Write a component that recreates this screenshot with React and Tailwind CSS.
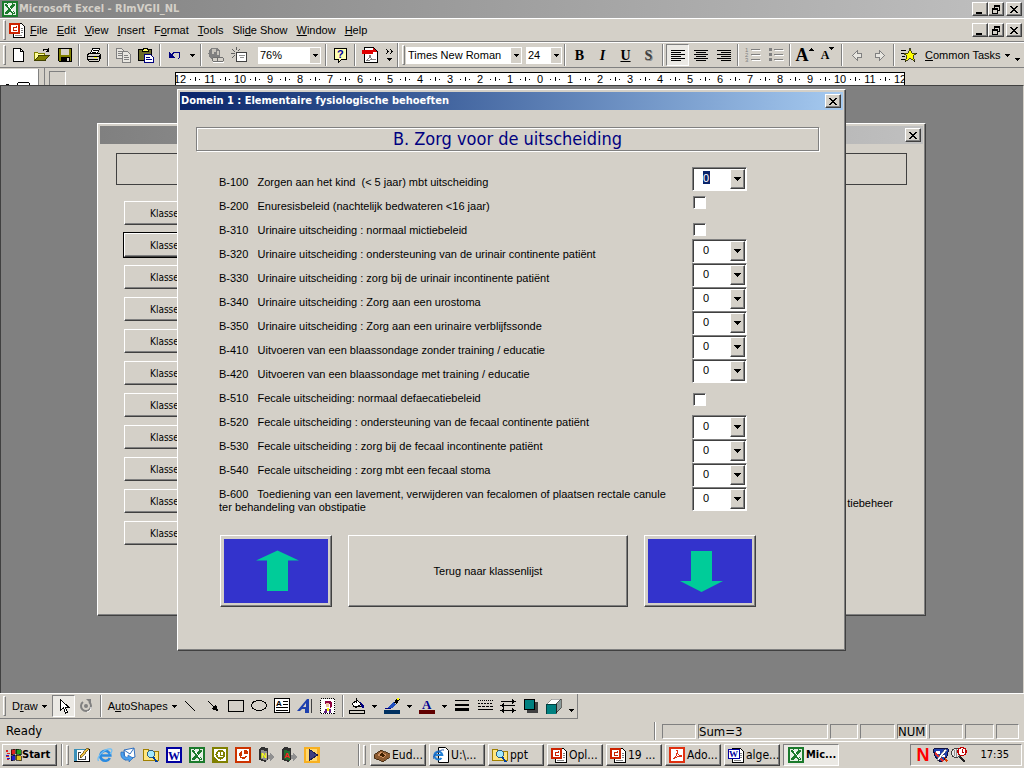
// PowerPoint workspace with the care registration dialog on top
import { useState } from 'react';

const raised =
  'bg-[#d4d0c8] border border-t-white border-l-white border-r-[#404040] border-b-[#404040] shadow-[inset_-1px_-1px_0_#808080]';
const sunken = 'border border-t-[#808080] border-l-[#808080] border-r-white border-b-white';
const pressed = 'bg-[#ebe9e4] border border-t-[#808080] border-l-[#808080] border-r-white border-b-white';

const menus = [
  ['', 'F', 'ile'],
  ['', 'E', 'dit'],
  ['', 'V', 'iew'],
  ['', 'I', 'nsert'],
  ['F', 'o', 'rmat'],
  ['', 'T', 'ools'],
  ['Sli', 'd', 'e Show'],
  ['', 'W', 'indow'],
  ['', 'H', 'elp'],
];

const items = [
  { id: 'B-100', text: 'Zorgen aan het kind  (< 5 jaar) mbt uitscheiding' },
  { id: 'B-200', text: 'Enuresisbeleid (nachtelijk bedwateren <16 jaar)' },
  { id: 'B-310', text: 'Urinaire uitscheiding : normaal mictiebeleid' },
  { id: 'B-320', text: 'Urinaire uitscheiding : ondersteuning van de urinair continente patiënt' },
  { id: 'B-330', text: 'Urinaire uitscheiding : zorg bij de urinair incontinente patiënt' },
  { id: 'B-340', text: 'Urinaire uitscheiding : Zorg aan een urostoma' },
  { id: 'B-350', text: 'Urinaire uitscheiding : Zorg aan een urinaire verblijfssonde' },
  { id: 'B-410', text: 'Uitvoeren van een blaassondage zonder training / educatie' },
  { id: 'B-420', text: 'Uitvoeren van een blaassondage met training / educatie' },
  { id: 'B-510', text: 'Fecale uitscheiding: normaal defaecatiebeleid' },
  { id: 'B-520', text: 'Fecale uitscheiding : ondersteuning van de fecaal continente patiënt' },
  { id: 'B-530', text: 'Fecale uitscheiding : zorg bij de fecaal incontinente patiënt' },
  { id: 'B-540', text: 'Fecale uitscheiding : zorg mbt een fecaal stoma' },
  {
    id: 'B-600',
    text: 'Toediening van een lavement, verwijderen van fecalomen of plaatsen rectale canule ter behandeling van obstipatie',
  },
];

function Svg({ children, w = 16, h = 16, smooth }) {
  return (
    <svg
      width={w}
      height={h}
      viewBox={`0 0 ${w} ${h}`}
      shapeRendering={smooth ? 'auto' : 'crispEdges'}
      fill="none"
      className="shrink-0"
      aria-hidden="true"
    >
      {children}
    </svg>
  );
}

/* ---------- icons ---------- */

const Caret = () => (
  <Svg w={5} h={3}>
    <path d="M0 0h5v1H0zM1 1h3v1H1zM2 2h1v1H2z" fill="#000" />
  </Svg>
);

const ExcelIcon = () => (
  <Svg>
    <rect width="16" height="16" fill="#1b7a2c" />
    <rect x="2" y="2" width="12" height="12" fill="#e6f0e6" />
    <path d="M4 3l8 10M12 3L4 13" stroke="#1b7a2c" strokeWidth="3" />
    <path d="M5 3l7 9" stroke="#fff" strokeWidth="1" />
  </Svg>
);

const SlideDocIcon = () => (
  <Svg>
    <path d="M4.500 1.500h8l3 3v11h-11z" fill="#fff" stroke="#000" />
    <path d="M12 6.500h2M12 8.500h2M12 10.500h2M6 13.500h7" stroke="#808080" />
    <rect x="0" y="1" width="11" height="11" fill="#fff" />
    <rect x="1" y="2" width="9" height="9" stroke="#cc2200" strokeWidth="2" />
    <path d="M4 5h3v1H5v2h3v1H4zM7 4h1v2H7z" fill="#cc2200" />
  </Svg>
);

const WordDocIcon = () => (
  <Svg>
    <path d="M4.500 1.500h8l3 3v11h-11z" fill="#fff" stroke="#000" />
    <path d="M12 6.500h2M12 8.500h2M12 10.500h2M6 13.500h7" stroke="#808080" />
    <rect x="0" y="2" width="12" height="10" fill="#0000a0" />
    <rect x="1" y="3" width="10" height="8" fill="#fff" />
    <text x="1" y="10" fontSize="9" fontWeight="bold" fontFamily="Liberation Serif, serif" fill="#0000a0">W</text>
  </Svg>
);

const NewIcon = () => (
  <Svg>
    <path d="M2.500 1.500h7l3 3v10h-10z" fill="#fff" stroke="#000" />
    <path d="M9.500 1.500v3h3" stroke="#000" />
  </Svg>
);

const OpenIcon = () => (
  <Svg>
    <path d="M0.500 13.500v-8h3l1 1h6v2" fill="#ffff99" stroke="#808000" />
    <path d="M1 13.500l4-5h10l-4 5z" fill="#808000" stroke="#404000" />
    <path d="M9 3.500c1-2 4-2 5 0M14.500 1v3h-3" stroke="#000" />
  </Svg>
);

const SaveIcon = () => (
  <Svg>
    <path d="M1.500 1.500h13v13h-12l-1-1z" fill="#808000" stroke="#000" />
    <rect x="4" y="2" width="8" height="6" fill="#d4d0c8" />
    <rect x="4" y="10" width="9" height="4" fill="#000" />
    <rect x="10" y="11" width="2" height="3" fill="#d4d0c8" />
  </Svg>
);

const PrintIcon = () => (
  <Svg>
    <path d="M4.500 6.500l2-5h7l-2 5z" fill="#fff" stroke="#000" />
    <path d="M7 3.500h5M6 5.500h4" stroke="#000" />
    <path d="M1.500 7.500l2-1h10l1 1v4l-2 3h-9l-2-2z" fill="#d4d0c8" stroke="#000" />
    <path d="M2 9.500h11M2 12.500h10M13.500 8v5" stroke="#000" />
    <rect x="8" y="10" width="3" height="1" fill="#ffff00" />
  </Svg>
);

const CopyIcon = () => (
  <Svg>
    <path d="M1.500 1.500h5l2 2v8h-7z" fill="#e8e6e0" stroke="#808080" />
    <path d="M3 4.500h4M3 6.500h5M3 8.500h5" stroke="#808080" />
    <path d="M7.500 4.500h5l3 3v8h-8z" fill="#e8e6e0" stroke="#808080" />
    <path d="M9 8.500h4M9 10.500h5M9 12.500h5" stroke="#808080" />
  </Svg>
);

const PasteIcon = () => (
  <Svg>
    <rect x="0.500" y="2.500" width="13" height="11" fill="#6b6b2a" stroke="#000" />
    <path d="M4.500 4.500v-2l2-1h2l2 1v2z" fill="#ffff66" stroke="#000" />
    <path d="M6.500 7.500h6l3 3v5h-9z" fill="#fff" stroke="#000080" />
    <path d="M8 10.500h4M8 12.500h6" stroke="#000080" />
  </Svg>
);

const UndoIcon = () => (
  <Svg>
    <path d="M2 5v6h6z" fill="#000080" />
    <path d="M5 8c2-4 8-4 8 0 0 2-1 3-2 4" stroke="#000080" strokeWidth="1" />
  </Svg>
);

const GlobeIcon = () => (
  <Svg>
    <circle cx="6.500" cy="6.500" r="6" fill="#808080" />
    <path d="M4 2h4v3H6v2H4zM9 4h2v4H9z" fill="#c8c4bc" />
    <rect x="4.500" y="10.500" width="6" height="4" rx="2" fill="#d4d0c8" stroke="#707070" />
    <rect x="9.500" y="10.500" width="6" height="4" rx="2" fill="#d4d0c8" stroke="#707070" />
    <path d="M5 15.500h11" stroke="#fff" />
  </Svg>
);

const NewSlideIcon = () => (
  <Svg>
    <rect x="5.500" y="5.500" width="10" height="9" fill="#fff" stroke="#404040" />
    <path d="M8 8.500h6M9 10.500h4" stroke="#909090" />
    <path d="M5.500 0v3M1 2l3 3M0 6.500h4M1 11l3-3M9 2L7 4" stroke="#606060" />
  </Svg>
);

const HelpIcon = () => (
  <Svg>
    <path d="M1.500 1.500h12v11h-5l-3 3v-3h-4z" fill="#ffffb0" stroke="#000" />
    <text x="4" y="11" fontSize="11" fontWeight="bold" fontFamily="Liberation Sans, sans-serif" fill="#0000a0">?</text>
  </Svg>
);

const PdfIcon = () => (
  <Svg>
    <path d="M2.500 0.500h9l4 4v11h-13z" fill="#fff" stroke="#000" />
    <rect x="0" y="3" width="11" height="4" fill="#e00000" />
    <path d="M11 1l4 4h-4z" fill="#e00000" />
    <path d="M4 14c2-1 4-4 4-6 0 3 2 5 6 5-4-1-7 0-10 1" stroke="#808080" />
  </Svg>
);

const alignRows = {
  left: [0, 0, 0, 0, 0, 0],
  center: [0, 2, 0, 2, 0, 2],
  right: [0, 4, 0, 4, 0, 4],
};

const AlignIcon = ({ kind }) => (
  <Svg>
    {alignRows[kind].map((x, i) => (
      <rect key={i} x={1 + x} y={3 + i * 2} width={i % 2 ? 10 : 14} height="1" fill="#000" />
    ))}
  </Svg>
);

const ListIcon = ({ numbered }) => (
  <Svg>
    {[1, 6, 11].map((y, i) => (
      <g key={y}>
        {numbered ? (
          <text x="0" y={y + 4} fontSize="6" fontFamily="Liberation Sans, sans-serif" fill="#808080">{i + 1}</text>
        ) : (
          <rect x="1" y={y} width="3" height="3" fill="#808080" />
        )}
        <rect x="6" y={y + 1} width="9" height="1" fill="#808080" />
        <rect x="7" y={y + 2} width="9" height="1" fill="#fff" />
      </g>
    ))}
  </Svg>
);

const ArrowOutline = ({ right }) => (
  <Svg>
    <path
      d={right ? 'M3.500 6.500h4v-3l5 5-5 5v-3h-4z' : 'M12.500 6.500h-4v-3l-5 5 5 5v-3h4z'}
      fill="#e8e6e0"
      stroke="#808080"
    />
  </Svg>
);

const StarIcon = () => (
  <Svg>
    <path d="M0 3.500h5M0 6.500h3M1 9.500h3M0 12.500h4" stroke="#000" />
    <path d="M9 1l2 5h5l-4 3 2 6-5-4-5 4 2-6-4-3h5z" fill="#ffff00" stroke="#000" strokeWidth="0.700" />
  </Svg>
);

const PointerIcon = () => (
  <Svg>
    <path d="M5.500 1.500v11l3-2.500 2 5 2-1-2-4.500h3.500z" fill="#fff" stroke="#000" />
  </Svg>
);

const RotateIcon = () => (
  <Svg smooth>
    <path d="M11 4a5 5 0 1 1-6 0" stroke="#808080" strokeWidth="2" />
    <path d="M8 1h5v5z" fill="#808080" />
    <circle cx="8" cy="8" r="2" fill="#808080" />
    <path d="M13 9a5 5 0 0 1-4 5" stroke="#fff" />
  </Svg>
);

const LineIcon = () => (
  <Svg><path d="M3 3l10 10" stroke="#000" /></Svg>
);

const LineArrowIcon = () => (
  <Svg>
    <path d="M3 3l7 7" stroke="#000" />
    <path d="M13 13l-7-2 5-5z" fill="#000" />
  </Svg>
);

const RectIcon = () => (
  <Svg><rect x="0.500" y="2.500" width="15" height="11" stroke="#000" /></Svg>
);

const OvalIcon = () => (
  <Svg><ellipse cx="8" cy="7.500" rx="7.500" ry="5" stroke="#000" /></Svg>
);

const TextBoxIcon = () => (
  <Svg>
    <rect x="0.500" y="0.500" width="15" height="14" fill="#fff" stroke="#000" />
    <text x="2" y="8" fontSize="8" fontWeight="bold" fontFamily="Liberation Sans, sans-serif" fill="#000">A</text>
    <path d="M9 3.500h5M9 6.500h5M2 9.500h12M2 12.500h12" stroke="#000" />
  </Svg>
);

const WordArtIcon = () => (
  <Svg smooth>
    <path d="M14.500 1v14" stroke="#404040" />
    <path d="M0 13L10 1h2v14H8v-4H5l-2 2z" fill="#1c3fae" />
    <path d="M6 9l3-4v4z" fill="#d4d0c8" />
  </Svg>
);

const ClipArtIcon = () => (
  <Svg>
    <rect x="0.500" y="0.500" width="14" height="15" fill="#fff" stroke="#000" strokeDasharray="1 1" />
    <path d="M5 3h5l2 2v4l-2 1V6L6 5l-1 3z" fill="#900040" />
    <path d="M6 5h3v4H6z" fill="#f0c0a0" />
    <path d="M5 11h2v4H4zM9 11h2v4H9z" fill="#602080" />
    <path d="M7 10h2v3H7z" fill="#ffff00" />
  </Svg>
);

const FillIcon = () => (
  <Svg>
    <path d="M3 6l5-4 4 4-5 4z" fill="#fff" stroke="#000" />
    <path d="M7 5V0M4 8h8" stroke="#000" />
    <path d="M11 4l4 3v3h-2z" fill="#000080" />
    <rect x="0.500" y="12.500" width="15" height="3" fill="#d4d0c8" stroke="#000" />
  </Svg>
);

const BrushIcon = () => (
  <Svg>
    <path d="M3 10l6-6 3 2-4 4z" fill="#2050c0" />
    <path d="M10 5l3-5 3 1-3 5z" fill="#000" />
    <rect x="13" y="0" width="2" height="2" fill="#ffff00" />
    <path d="M1 10.500h6" stroke="#000080" />
    <rect y="12" width="16" height="4" fill="#003060" />
  </Svg>
);

const FontColorIcon = () => (
  <Svg>
    <text x="3" y="11" fontSize="13" fontWeight="bold" fontFamily="Liberation Serif, serif" fill="#000090">A</text>
    <rect y="12" width="16" height="4" fill="#600000" />
  </Svg>
);

const WeightIcon = () => (
  <Svg><path d="M1 2h14v1H1zM1 6h14v2H1zM1 10h14v3H1z" fill="#000" /></Svg>
);

const DashIcon = () => (
  <Svg>
    <path d="M1 2.500h15" stroke="#000" strokeDasharray="1 1" />
    <path d="M1 5.500h15" stroke="#000" strokeDasharray="2 1" />
    <path d="M1 8.500h15" stroke="#000" strokeDasharray="3 1" />
    <path d="M1 11.500h15" stroke="#000" />
  </Svg>
);

const ArrowStyleIcon = () => (
  <Svg>
    <path d="M1 3.500h13M2 7.500h13M2 12.500h12" stroke="#000" />
    <path d="M12 1l4 2.500-4 2.500zM4 5L0 7.500 4 10zM12 10l4 2.500-4 2.500zM4 10l-4 2.500L4 15z" fill="#000" />
  </Svg>
);

const ShadowIcon = () => (
  <Svg>
    <rect x="4" y="4" width="11" height="11" fill="#404040" />
    <rect x="1.500" y="1.500" width="10" height="10" fill="#008080" stroke="#000" />
  </Svg>
);

const CubeIcon = () => (
  <Svg>
    <path d="M1 6l5-5h9l-5 5z" fill="#fff" stroke="#606060" strokeWidth="0.500" />
    <path d="M10 6l5-5v9l-5 5z" fill="#8a9a9a" stroke="#000" strokeWidth="0.500" />
    <rect x="0" y="6" width="10" height="10" fill="#008080" stroke="#000" strokeWidth="0.500" />
  </Svg>
);

const WindowsFlag = () => (
  <Svg>
    <path d="M0 4h2M1 6.500h3M0 9.500h3M1 12.500h2" stroke="#e02020" strokeWidth="1.500" />
    <path d="M0 8h3M1 11h3" stroke="#2020d0" />
    <path d="M5 3l4-1v5l-4 1z" fill="#e02020" stroke="#000" strokeWidth="0.600" />
    <path d="M10 2l5 1v5l-5-1z" fill="#20a020" stroke="#000" strokeWidth="0.600" />
    <path d="M5 9l4-1v5l-4 1z" fill="#2020d0" stroke="#000" strokeWidth="0.600" />
    <path d="M10 8l5 1v5l-5-1z" fill="#e0c020" stroke="#000" strokeWidth="0.600" />
  </Svg>
);

const DesktopIcon = () => (
  <Svg>
    <path d="M0 2h12v13H0z" fill="#3a90b8" />
    <path d="M3 3h12v11H3z" fill="#fff" />
    <path d="M0 14h15v1H0zM15 2h1v13h-1z" fill="#000" />
    <path d="M6.500 5.500h-2v7h7v-4" stroke="#404040" />
    <path d="M6 9l7-8 2 1-7 8-2 1z" fill="#f0c040" stroke="#403000" strokeWidth="0.600" />
  </Svg>
);

const IeIcon = () => (
  <Svg smooth>
    <path d="M12.800 11a5 5 0 1 1 .5-2.500H4" stroke="#2a8ae0" strokeWidth="2.600" />
    <path d="M1.500 14C-1 10 8 1 14 2c2 1 0 4-1 5" stroke="#70bff5" strokeWidth="1.300" />
  </Svg>
);

const MailIcon = () => (
  <Svg smooth>
    <path d="M4 3l10-2 1 9-10 3z" fill="#fff" stroke="#3070c0" />
    <path d="M4 3l6 4 4-6" stroke="#3070c0" />
    <path d="M1 5c-1 5 2 9 8 8v2l4-4-5-3v2C5 11 3 8 4 5z" fill="#4aa0ee" stroke="#2060b0" strokeWidth="0.600" />
  </Svg>
);

const SearchFolderIcon = () => (
  <Svg>
    <path d="M0.500 2.500h5l1 2h9v9h-15z" fill="#ffe680" stroke="#a08000" />
    <circle cx="8" cy="7" r="3.500" fill="#a0e8ff" stroke="#306080" />
    <path d="M10 10l4 5" stroke="#0040a0" strokeWidth="2" />
  </Svg>
);

const WordIcon = () => (
  <Svg>
    <rect width="16" height="16" fill="#0000a0" />
    <rect x="2" y="2" width="12" height="12" fill="#fff" />
    <text x="2" y="13" fontSize="12" fontWeight="bold" fontFamily="Liberation Serif, serif" fill="#0000a0">W</text>
  </Svg>
);

const OutlookIcon = () => (
  <Svg>
    <rect width="16" height="16" fill="#808000" />
    <rect x="2" y="2" width="12" height="12" fill="#fff" />
    <circle cx="8.500" cy="7.500" r="4" stroke="#808000" strokeWidth="2" />
    <path d="M8.500 5v3h2" stroke="#808000" />
    <path d="M2 10l4 4H2z" fill="#808000" />
  </Svg>
);

const PowerPointIcon = () => (
  <Svg>
    <rect width="16" height="16" fill="#cc3300" />
    <rect x="2" y="2" width="12" height="12" fill="#fff" />
    <path d="M7 4a4 4 0 1 0 5 5H7z" fill="#cc3300" />
    <path d="M9 3v4h4V5l-2-2z" fill="#cc3300" />
    <path d="M6 9.500h4" stroke="#fff" />
  </Svg>
);

const DoorIcon = ({ letter, color, fill }) => (
  <Svg>
    <path d="M1 2l3-2 6 1v12l-3 2-6-2z" fill="#303030" />
    <path d="M3 3l6 1v10l-6-2z" fill={fill} />
    <text x="3" y="11" fontSize="8" fontWeight="bold" fontFamily="Liberation Sans, sans-serif" fill={color}>{letter}</text>
    <path d="M10 8h2V6l4 4-4 4v-2h-2z" fill="#909090" />
  </Svg>
);

const PlayIcon = () => (
  <Svg>
    <rect width="16" height="16" fill="#f8b020" />
    <rect x="2" y="2" width="11" height="12" fill="#ffd870" />
    <path d="M5.500 2.500l8 5.500-8 5.500z" fill="#404080" stroke="#202050" />
  </Svg>
);

const EudoraIcon = () => (
  <Svg>
    <path d="M0 8l7-5 9 4v3l-7 5-9-4z" fill="#8a5a30" stroke="#301800" strokeWidth="0.700" />
    <path d="M3 8l4-3 6 3-4 3z" fill="#d09060" />
    <path d="M5 8l3-2 3 2-2 2z" fill="#402000" />
  </Svg>
);

const IeDocIcon = () => (
  <Svg smooth>
    <path d="M5.500 0.500h7l3 3v12h-10z" fill="#fff" stroke="#000" />
    <path d="M8.500 11a4 4 0 1 1 .8-3H2" stroke="#1f7fd6" strokeWidth="2" />
    <path d="M0 12C0 8 7 2 11 3" stroke="#1f50a0" />
  </Svg>
);

const AcrobatIcon = () => (
  <Svg>
    <rect x="1" y="1" width="14" height="14" fill="#fff" stroke="#e03010" strokeWidth="2" />
    <path d="M4 12c3-2 5-5 4-9 0 4 2 6 5 6-4 0-6 1-9 3" stroke="#e03010" strokeWidth="1.200" />
  </Svg>
);

const ShieldIcon = () => (
  <Svg>
    <path d="M1 2l4-1 3 1 3-1 4 1c1 6-2 10-7 13C3 12 0 8 1 2z" fill="#2040b0" stroke="#101040" />
    <path d="M3 4h4v3H3zM9 8h3v2H9z" fill="#fff" />
    <path d="M2 5l9 9-2 1-7-7z" fill="#e03030" />
    <path d="M12 2L5 11l-1 3 3-2 7-9z" fill="#fff" stroke="#404040" strokeWidth="0.500" />
    <path d="M11 10l4 4-2 1z" fill="#e04000" />
  </Svg>
);

const ScanIcon = () => (
  <Svg>
    <circle cx="5" cy="6" r="4.500" fill="#e8e8e8" stroke="#404040" />
    <path d="M5 2v8M3 3v6" stroke="#909090" />
    <circle cx="11" cy="4.500" r="4" fill="#fff" stroke="#c00000" strokeWidth="1.500" />
    <path d="M11 2v3h2" stroke="#c00000" />
    <path d="M9 10l5 5" stroke="#202020" strokeWidth="2" />
  </Svg>
);

/* ---------- shared controls ---------- */

function IconButton({ label, active, children }) {
  return (
    <button
      aria-label={label}
      className={`flex h-[22px] w-[23px] shrink-0 items-center justify-center ${active ? pressed : ''}`}
    >
      {children}
    </button>
  );
}

function DropButton({ label }) {
  return (
    <button aria-label={label} className="flex h-[22px] w-3 shrink-0 items-center justify-center">
      <Caret />
    </button>
  );
}

const Sep = () => <div className="mx-0.5 h-[22px] w-0.5 shrink-0 border-l border-r border-l-[#808080] border-r-white" />;

const Grip = () => (
  <div className="ml-[3px] mr-px h-5 w-[3px] shrink-0 border border-t-white border-l-white border-r-[#808080] border-b-[#808080]" />
);

function ToolbarSelect({ label, value, width }) {
  return (
    <div className={`relative shrink-0 ${width}`}>
      <select
        aria-label={label}
        defaultValue={value}
        className="block h-[17px] w-full appearance-none bg-white pl-0.5 text-[11px] leading-[17px] outline-none"
      >
        <option>{value}</option>
      </select>
      <span className="pointer-events-none absolute top-px right-px bottom-px flex w-2.5 items-center justify-center bg-[#d4d0c8]">
        <Caret />
      </span>
    </div>
  );
}

function WindowButton({ kind, label }) {
  return (
    <button aria-label={label} className={`flex h-[14px] w-4 shrink-0 items-center justify-center ${raised}`}>
      <Svg w={10} h={9}>
        {kind === 'min' && <rect x="1" y="7" width="6" height="2" fill="#000" />}
        {kind === 'restore' && (
          <>
            <path d="M3 0h6v2H3zM3 2h1v1H3zM8 2h1v4H8zM7 5h1v1H7z" fill="#000" />
            <path d="M1 3h6v2H1zM1 5h1v4H1zM6 5h1v4H6zM2 8h4v1H2z" fill="#000" />
          </>
        )}
        {kind === 'close' && (
          <path
            d="M1 1h2v1H1zM7 1h2v1H7zM2 2h2v1H2zM6 2h2v1H6zM3 3h4v1H3zM4 4h2v1H4zM3 5h4v1H3zM2 6h2v1H2zM6 6h2v1H6zM1 7h2v1H1zM7 7h2v1H7z"
            fill="#000"
          />
        )}
      </Svg>
    </button>
  );
}

function WindowButtons() {
  return (
    <div className="ml-auto flex pr-0.5">
      <WindowButton kind="min" label="Minimize" />
      <WindowButton kind="restore" label="Restore" />
      <div className="w-0.5" />
      <WindowButton kind="close" label="Close" />
    </div>
  );
}

/* ---------- top bars ---------- */

function TitleBar() {
  return (
    <header className="flex h-[18px] items-center bg-linear-to-r from-[#808080] to-[#c0c0c0] pl-0.5">
      <ExcelIcon />
      <h1 className="pl-px font-['DejaVu_Sans_Condensed',sans-serif] text-[11px] font-bold text-[#d4d0c8]">
        Microsoft Excel - RImVGII_NL
      </h1>
      <WindowButtons />
    </header>
  );
}

function MenuBar() {
  return (
    <nav className="flex h-6 items-center border-t border-b border-t-white border-b-[#808080]">
      <Grip />
      <div className="w-0.5" />
      <SlideDocIcon />
      <div className="flex gap-[9px] pl-[5px]">
        {menus.map(([a, key, b]) => (
          <button key={a + key + b} className="whitespace-pre">
            {a}
            <span className="underline">{key}</span>
            {b}
          </button>
        ))}
      </div>
      <WindowButtons />
    </nav>
  );
}

function Toolbar() {
  return (
    <div className="flex h-[26px] items-center overflow-hidden border-t border-b border-t-white border-b-[#808080]">
      <Grip />
      <IconButton label="New"><NewIcon /></IconButton>
      <IconButton label="Open"><OpenIcon /></IconButton>
      <IconButton label="Save"><SaveIcon /></IconButton>
      <Sep />
      <IconButton label="Print"><PrintIcon /></IconButton>
      <Sep />
      <IconButton label="Copy"><CopyIcon /></IconButton>
      <IconButton label="Paste"><PasteIcon /></IconButton>
      <Sep />
      <IconButton label="Undo"><UndoIcon /></IconButton>
      <DropButton label="Undo list" />
      <Sep />
      <IconButton label="Insert hyperlink"><GlobeIcon /></IconButton>
      <IconButton label="New slide"><NewSlideIcon /></IconButton>
      <div className="w-2" />
      <ToolbarSelect label="Zoom" value="76%" width="w-[63px]" />
      <div className="w-0.5" />
      <Sep />
      <IconButton label="Help"><HelpIcon /></IconButton>
      <Sep />
      <IconButton label="Create PDF"><PdfIcon /></IconButton>
      <button aria-label="More buttons" className="flex h-[22px] w-4 flex-col items-center justify-center gap-1">
        <Svg w={8} h={5}>
          <path d="M1 0l2 2.500L1 5M5 0l2 2.500L5 5" stroke="#000" />
        </Svg>
        <Caret />
      </button>
      <div className="h-full w-0.5 border-l border-r border-l-[#808080] border-r-white" />
      <Grip />
      <ToolbarSelect label="Font" value="Times New Roman" width="w-[116px]" />
      <div className="w-1" />
      <ToolbarSelect label="Font size" value="24" width="w-9" />
      <Sep />
      <div className="flex font-['Liberation_Serif',serif] text-[14px] font-bold">
        <IconButton label="Bold">B</IconButton>
        <IconButton label="Italic"><span className="italic">I</span></IconButton>
        <IconButton label="Underline"><span className="underline">U</span></IconButton>
        <IconButton label="Shadow">
          <span className="text-[#404040] [text-shadow:1px_1px_0_#909090]">S</span>
        </IconButton>
      </div>
      <Sep />
      <IconButton label="Align left" active><AlignIcon kind="left" /></IconButton>
      <IconButton label="Center"><AlignIcon kind="center" /></IconButton>
      <IconButton label="Align right"><AlignIcon kind="right" /></IconButton>
      <Sep />
      <IconButton label="Numbering"><ListIcon numbered /></IconButton>
      <IconButton label="Bullets"><ListIcon /></IconButton>
      <Sep />
      <div className="flex font-['Liberation_Serif',serif] font-bold">
        <IconButton label="Increase font size">
          <span className="text-[18px] leading-5">A</span>
          <span className="self-start"><Svg w={5} h={8}><path d="M2 4h1v1H2zM1 5h3v1H1zM0 6h5v1H0z" fill="#000" /></Svg></span>
        </IconButton>
        <IconButton label="Decrease font size">
          <span className="text-[12px] leading-5">A</span>
          <span className="self-start"><Svg w={5} h={8}><path d="M0 3h5v1H0zM1 4h3v1H1zM2 5h1v1H2z" fill="#000" /></Svg></span>
        </IconButton>
      </div>
      <Sep />
      <IconButton label="Promote"><ArrowOutline /></IconButton>
      <IconButton label="Demote"><ArrowOutline right /></IconButton>
      <Sep />
      <button className="flex items-center gap-2 pl-1 whitespace-nowrap">
        <StarIcon />
        <span className="flex items-center gap-1">
          <span><span className="underline">C</span>ommon Tasks</span>
          <Caret />
        </span>
      </button>
      <button aria-label="Toolbar options" className="ml-auto self-end pr-1 pb-1.5"><Caret /></button>
    </div>
  );
}

function Ruler() {
  const marks = Array.from({ length: 25 }, (_, i) => Math.abs(i - 12));
  return (
    <div className="flex h-[17px] items-end overflow-hidden">
      <div className="flex h-4 w-[39px] shrink-0 items-end justify-end border-r border-r-[#808080] bg-white pr-1">
        <Svg w={28} h={4}>
          <path d="M0 3h3v1H0zM12 1h11v1H12zM11 2h1v2h-1zM23 2h1v2h-1z" fill="#000" />
        </Svg>
      </div>
      <div className="h-full w-1.5 shrink-0 border-r border-r-[#808080]" />
      <div className="ml-1 h-3.5 w-[17px] shrink-0 border border-b-0 border-t-[#808080] border-l-[#808080] border-r-white" />
      <div className="ml-[109px] flex h-[13px] w-[730px] shrink-0 justify-center overflow-hidden border-t border-r border-l border-black bg-white">
        {marks.map((n, i) => (
          <div key={i} className="flex w-[30px] shrink-0 items-center justify-between leading-3">
            <span className="h-1 w-px bg-black" />
            <span className="size-px bg-black" />
            <span className="w-3.5 text-center">{n}</span>
            <span className="size-px bg-black" />
            <span className="w-px" />
          </div>
        ))}
      </div>
    </div>
  );
}

/* ---------- windows ---------- */

function ComboBox({ id, highlighted }) {
  const [value, setValue] = useState('0');
  return (
    <div className="relative h-6 w-[55px]">
      <select
        id={id}
        value={value}
        onChange={e => setValue(e.target.value)}
        className={`block h-6 w-full appearance-none border border-t-[#808080] border-l-[#808080] border-r-white border-b-white bg-white pb-0.5 pl-2.5 text-[11px] leading-5 shadow-[inset_1px_1px_0_#404040] outline-none ${
          highlighted
            ? 'bg-[linear-gradient(#0a246a,#0a246a)] bg-[size:7px_13px] bg-[position:10px_3px] bg-no-repeat text-white'
            : 'text-black'
        }`}
      >
        {['0', '1', '2', '3', '4'].map(n => (
          <option key={n} className="text-black">{n}</option>
        ))}
      </select>
      <span
        className={`pointer-events-none absolute top-0.5 right-0.5 bottom-0.5 flex w-[15px] items-center justify-center ${raised}`}
      >
        <Svg w={7} h={4}>
          <path d="M0 0h7v1H0zM1 1h5v1H1zM2 2h3v1H2zM3 3h1v1H3z" fill="#000" />
        </Svg>
      </span>
    </div>
  );
}

function CheckBox({ id }) {
  return (
    <input
      id={id}
      type="checkbox"
      className="ml-px block size-[13px] appearance-none border border-t-[#808080] border-l-[#808080] border-r-white border-b-white bg-white shadow-[inset_1px_1px_0_#404040] checked:bg-[#0a246a]"
    />
  );
}

function BackgroundWindow() {
  return (
    <section className={`absolute top-[37px] left-[96px] w-[829px] p-0.5 pb-[70px] ${raised}`}>
      <div className="flex h-[18px] items-center justify-end bg-linear-to-r from-[#808080] to-[#c0c0c0] pr-0.5">
        <WindowButton kind="close" label="Close" />
      </div>
      <div className="mx-4 mt-[9px] h-8 border border-[#404040]" />
      <div className="mt-4 flex flex-col gap-2 pl-6">
        {Array.from({ length: 11 }, (_, i) => (
          <div key={i} className="flex h-6 items-center justify-between pr-[30px]">
            <button
              className={`h-6 w-40 pl-[25px] text-left font-['DejaVu_Sans_Condensed',sans-serif] text-[10px] ${raised} ${i === 1 ? 'outline outline-black' : ''}`}
            >
              Klasse
            </button>
            {i === 9 && <span className="pt-1">tiebeheer</span>}
          </div>
        ))}
      </div>
    </section>
  );
}

function NavButton({ label, children }) {
  return (
    <button aria-label={label} className={`flex h-[72px] w-28 items-center justify-center ${raised}`}>
      <svg width="104" height="64" viewBox="0 0 104 64" className="bg-[#3333cc]" aria-hidden="true">
        {children}
      </svg>
    </button>
  );
}

function FormDialog() {
  return (
    <section className={`absolute top-[3px] left-[176px] w-[669px] p-0.5 pb-[43px] ${raised}`}>
      <div className="flex h-[18px] items-center justify-between bg-linear-to-r from-[#0a246a] to-[#a6caf0] pr-0.5 pl-px">
        <h2 className="font-['DejaVu_Sans_Condensed',sans-serif] text-[11px] font-bold text-white">
          Domein 1 : Elementaire fysiologische behoeften
        </h2>
        <WindowButton kind="close" label="Close" />
      </div>

      <div className="mr-6 ml-4 pt-[17px]">
        <div className="border border-[#808080] text-center shadow-[inset_1px_1px_0_#fff,1px_1px_0_#fff]">
          <h3 className="font-['DejaVu_Sans_Condensed',sans-serif] text-[18px] leading-[22px] text-[#000080]">
            B. Zorg voor de uitscheiding
          </h3>
        </div>
      </div>

      <div className="mt-4 flex pl-[39px]">
        <div className="w-[473px] pt-[3px]">
          {items.map(({ id, text }) => (
            <label
              key={id}
              htmlFor={id}
              className="block h-6 w-[452px] pt-1.5 leading-[13px] whitespace-pre-wrap"
            >
              {`${id}   ${text}`}
            </label>
          ))}
        </div>
        <div>
          <ComboBox id="B-100" highlighted />
          <div className="flex h-12 flex-col gap-3.5 pt-[5px]">
            <CheckBox id="B-200" />
            <CheckBox id="B-310" />
          </div>
          {['B-320', 'B-330', 'B-340', 'B-350', 'B-410', 'B-420'].map(id => (
            <ComboBox key={id} id={id} />
          ))}
          <div className="flex h-8 items-center">
            <CheckBox id="B-510" />
          </div>
          {['B-520', 'B-530', 'B-540', 'B-600'].map(id => (
            <ComboBox key={id} id={id} />
          ))}
        </div>
      </div>

      <div className="mt-6 flex gap-4 pl-10">
        <NavButton label="Vorige">
          <path d="M53.500 11.500L75 21.500H64V52H43V21.500H32z" fill="#00cc99" />
        </NavButton>
        <button className={`h-[72px] w-[280px] ${raised}`}>Terug naar klassenlijst</button>
        <NavButton label="Volgende">
          <path d="M53.500 53L75 42H64V12H43V42H32z" fill="#00cc99" />
        </NavButton>
      </div>
    </section>
  );
}

/* ---------- bottom bars ---------- */

function DrawingBar() {
  return (
    <div className="flex border-t border-t-white">
      <div className="flex h-[25px] items-center border-r border-b border-[#808080]">
        <Grip />
        <button className="flex items-center gap-1 px-[5px]">
          <span>D<span className="underline">r</span>aw</span>
          <Caret />
        </button>
        <IconButton label="Select objects" active><PointerIcon /></IconButton>
        <IconButton label="Free rotate"><RotateIcon /></IconButton>
        <Sep />
        <button className="flex items-center gap-1 pr-0.5 pl-1">
          <span>A<span className="underline">u</span>toShapes</span>
          <Caret />
        </button>
        <IconButton label="Line"><LineIcon /></IconButton>
        <IconButton label="Arrow"><LineArrowIcon /></IconButton>
        <IconButton label="Rectangle"><RectIcon /></IconButton>
        <IconButton label="Oval"><OvalIcon /></IconButton>
        <IconButton label="Text box"><TextBoxIcon /></IconButton>
        <IconButton label="WordArt"><WordArtIcon /></IconButton>
        <IconButton label="Clip art"><ClipArtIcon /></IconButton>
        <Sep />
        <IconButton label="Fill color"><FillIcon /></IconButton>
        <DropButton label="Fill colors" />
        <IconButton label="Line color"><BrushIcon /></IconButton>
        <DropButton label="Line colors" />
        <IconButton label="Font color"><FontColorIcon /></IconButton>
        <DropButton label="Font colors" />
        <IconButton label="Line style"><WeightIcon /></IconButton>
        <IconButton label="Dash style"><DashIcon /></IconButton>
        <IconButton label="Arrow style"><ArrowStyleIcon /></IconButton>
        <IconButton label="Shadow style"><ShadowIcon /></IconButton>
        <IconButton label="3-D style"><CubeIcon /></IconButton>
        <button aria-label="Drawing options" className="self-end px-[3px] pb-1.5"><Caret /></button>
      </div>
    </div>
  );
}

function StatusBar() {
  const cells = [
    ['w-[34px]', ''],
    ['w-[130px]', 'Sum=3'],
    ['w-7', ''],
    ['w-[35px]', ''],
    ['w-[30px]', 'NUM'],
    ['w-[34px]', ''],
    ['w-[29px]', ''],
    ['w-[23px]', ''],
  ];
  return (
    <div className="flex h-[22px] items-center pt-0.5 pr-[5px] pl-1.5 font-['DejaVu_Sans_Condensed',sans-serif] text-[13px]">
      <span>Ready</span>
      <div className="mr-1.5 ml-auto h-[18px] w-0.5 border-l border-r border-l-[#808080] border-r-white" />
      <div className="flex gap-0.5">
        {cells.map(([w, text], i) => (
          <div key={i} className={`h-[15px] leading-[13px] ${w} ${sunken}`}>{text}</div>
        ))}
      </div>
    </div>
  );
}

function TaskBar() {
  const quick = [
    ['Desktop', <DesktopIcon />],
    ['Internet Explorer', <IeIcon />],
    ['Outlook Express', <MailIcon />],
    ['Explorer', <SearchFolderIcon />],
    ['Word', <WordIcon />],
    ['Excel', <ExcelIcon />],
    ['Outlook', <OutlookIcon />],
    ['PowerPoint', <PowerPointIcon />],
    ['Novell', <DoorIcon letter="N" color="#ffff00" fill="#909090" />],
    ['Access', <DoorIcon letter="A" color="#ff2020" fill="#207030" />],
    ['Media player', <PlayIcon />],
  ];
  const tasks = [
    ['Eud...', <EudoraIcon />],
    ['U:\\...', <IeDocIcon />],
    ['ppt', <SearchFolderIcon />],
    ['Opl...', <SlideDocIcon />],
    ['19 ...', <SlideDocIcon />],
    ['Ado...', <AcrobatIcon />],
    ['alge...', <WordDocIcon />],
  ];
  return (
    <footer className="flex h-[27px] items-center border-t border-t-white px-0.5 font-['DejaVu_Sans_Condensed',sans-serif] text-[12px]">
      <button className={`flex h-[22px] w-[55px] items-center pl-[3px] text-[11px] font-bold ${raised}`}>
        <WindowsFlag />
        Start
      </button>
      <div className="ml-1 h-[22px] w-0.5 border-l border-r border-l-[#808080] border-r-white" />
      <Grip />
      <div className="flex gap-[7px] pl-1">
        {quick.map(([label, icon]) => (
          <button key={label} aria-label={label}>{icon}</button>
        ))}
      </div>
      <div className="ml-auto h-[22px] w-0.5 border-l border-r border-l-[#808080] border-r-white" />
      <Grip />
      <div className="flex gap-[3px] pl-[3px]">
        {tasks.map(([label, icon]) => (
          <button key={label} className={`flex h-[22px] w-14 items-center gap-0.5 overflow-hidden pl-[3px] whitespace-nowrap ${raised}`}>
            {icon}
            {label}
          </button>
        ))}
        <button className={`flex h-[22px] w-14 items-center gap-0.5 overflow-hidden pl-1 text-[11px] font-bold ${pressed}`}>
          <ExcelIcon />
          Mic...
        </button>
      </div>
      <div className={`ml-[71px] flex h-[22px] w-28 shrink-0 items-center gap-0.5 pl-1 ${sunken}`}>
        <span className="w-4 text-center font-['Liberation_Sans',sans-serif] text-[18px] leading-5 font-bold text-[#ff0000]">N</span>
        <ShieldIcon />
        <ScanIcon />
        <span className="ml-auto pr-3 text-[11px]">17:35</span>
      </div>
    </footer>
  );
}

export default function App() {
  return (
    <div className="flex min-h-screen flex-col overflow-hidden bg-[#d4d0c8] font-['Liberation_Sans',sans-serif] text-[11px] text-black">
      <TitleBar />
      <MenuBar />
      <Toolbar />
      <Ruler />
      <main className="relative min-h-[580px] flex-1 border-t border-r border-l border-t-[#404040] border-r-[#d4d0c8] border-l-[#404040] bg-[#808080]">
        <BackgroundWindow />
        <FormDialog />
      </main>
      <DrawingBar />
      <StatusBar />
      <TaskBar />
    </div>
  );
}
